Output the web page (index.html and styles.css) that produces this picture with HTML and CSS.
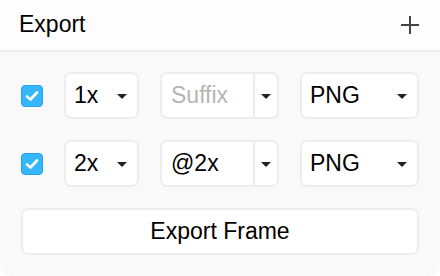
FILE: index.html
```html
<!DOCTYPE html>
<html>
<head>
<meta charset="utf-8">
<link rel="stylesheet" href="styles.css">
</head>
<body>
<div class="panel">
  <div class="header">
    <span class="title">Export</span>
    <svg class="plus" width="20" height="20" viewBox="0 0 20 20"><path d="M10 1V19M1 10H19" stroke="#444" stroke-width="2" fill="none"/></svg>
  </div>
  <div class="body">
    <div class="row">
      <span class="check"><svg width="14" height="12" viewBox="0 0 14 12"><path d="M2 6.5L5.5 9.5L12 2.5" stroke="#fff" stroke-width="2.6" fill="none" stroke-linecap="round" stroke-linejoin="round"/></svg></span>
      <div class="select scale"><span>1x</span><i class="caret"></i></div>
      <div class="suffix"><span class="input placeholder">Suffix</span><span class="drop"><i class="caret"></i></span></div>
      <div class="select fmt"><span>PNG</span><i class="caret"></i></div>
    </div>
    <div class="row">
      <span class="check"><svg width="14" height="12" viewBox="0 0 14 12"><path d="M2 6.5L5.5 9.5L12 2.5" stroke="#fff" stroke-width="2.6" fill="none" stroke-linecap="round" stroke-linejoin="round"/></svg></span>
      <div class="select scale"><span>2x</span><i class="caret"></i></div>
      <div class="suffix"><span class="input">@2x</span><span class="drop"><i class="caret"></i></span></div>
      <div class="select fmt"><span>PNG</span><i class="caret"></i></div>
    </div>
    <div class="button">Export Frame</div>
  </div>
</div>
</body>
</html>
```

FILE: styles.css
```css
html, body {
  margin: 0;
  padding: 0;
  background: #ffffff;
}
body {
  width: 440px;
  height: 276px;
  font-family: "Liberation Sans", Arial, sans-serif;
  font-size: 23px;
  color: #000;
}
.panel {
  width: 440px;
  height: 276px;
  background: #f9f9f9;
  border-radius: 12px;
  overflow: hidden;
  display: flex;
  flex-direction: column;
}
.header {
  height: 50px;
  background: #fdfdfd;
  border-bottom: 2px solid #ececec;
  display: flex;
  align-items: center;
  justify-content: space-between;
  padding: 0 20px 0 19px;
  flex-shrink: 0;
}
.title {
  line-height: 1;
  margin-top: -2px;
}
.plus {
  display: block;
}
.body {
  padding: 20px 21px 0 21px;
  display: flex;
  flex-direction: column;
  gap: 21px;
}
.row {
  display: grid;
  grid-template-columns: 22px 75px 119px 119px;
  column-gap: 21px;
  align-items: center;
  height: 47px;
}
.check {
  width: 22px;
  height: 22px;
  box-sizing: border-box;
  background: #35b6fd;
  border: 1px solid #22a3f2;
  border-radius: 4px;
  display: flex;
  align-items: center;
  justify-content: center;
}
.check svg {
  display: block;
}
.select, .suffix, .button {
  box-sizing: border-box;
  height: 47px;
  background: #fff;
  border: 2px solid #ededed;
  border-radius: 7px;
}
.select {
  display: flex;
  align-items: center;
  justify-content: space-between;
  padding: 0 10px 0 8px;
}
.caret {
  display: block;
  width: 0;
  height: 0;
  border-left: 5px solid transparent;
  border-right: 5px solid transparent;
  border-top: 5px solid #222;
  margin-top: 1px;
}
.suffix {
  display: flex;
  align-items: stretch;
}
.input {
  flex: 1;
  display: flex;
  align-items: center;
  padding-left: 9px;
}
.placeholder {
  color: #b5b5b5;
}
.drop {
  width: 22px;
  border-left: 2px solid #ededed;
  display: flex;
  align-items: center;
  justify-content: center;
}
.button {
  width: 398px;
  display: flex;
  align-items: center;
  justify-content: center;
}
```
